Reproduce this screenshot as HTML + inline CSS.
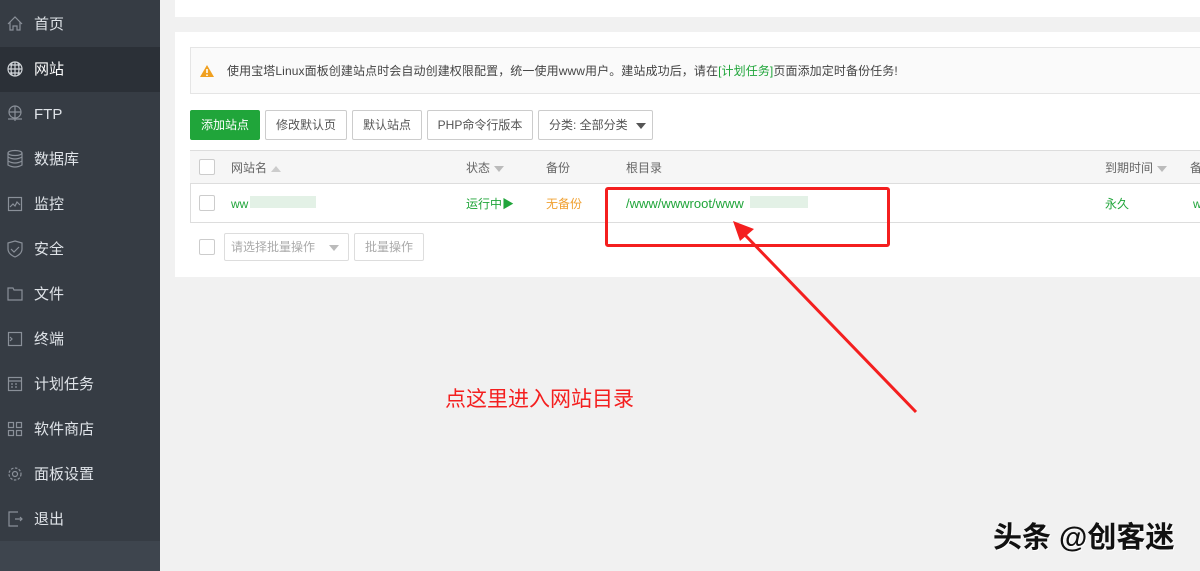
<!DOCTYPE html>
<html><head><meta charset="utf-8"><style>
*{margin:0;padding:0;box-sizing:border-box}
body{width:1200px;height:571px;overflow:hidden;background:#f1f1f1;font-family:"Liberation Sans","Noto Sans CJK SC",sans-serif;position:relative;font-size:12px;color:#555}
.side{position:absolute;left:0;top:0;width:160px;height:541px;background:#363c44}
.side2{position:absolute;left:0;top:541px;width:160px;height:30px;background:#3e454e}
.it{position:absolute;left:0;width:160px;height:45px;color:#dfe3e8;font-size:15px;line-height:45px;padding-left:34px}
.it.on{background:#2b3037;color:#fff}
.abs{position:absolute}
.card{background:#fff}
.btn{position:absolute;top:110px;height:30px;border:1px solid #ccc;border-radius:2px;background:#fff;color:#555;font-size:12px;line-height:28px;text-align:center}
.chk{position:absolute;width:16px;height:16px;border:1px solid #ccc;background:#fff;border-radius:2px}
.tri{display:inline-block;width:0;height:0;border-left:5px solid transparent;border-right:5px solid transparent;border-top:6px solid #bbb;vertical-align:middle;margin-left:4px}
.g{color:#20a53a}
</style></head><body>
<div class="side"></div><div class="side2"></div>
<div class="it" style="top:2px">首页</div>
<div class="it on" style="top:47px">网站</div>
<div class="it" style="top:92px">FTP</div>
<div class="it" style="top:137px">数据库</div>
<div class="it" style="top:182px">监控</div>
<div class="it" style="top:227px">安全</div>
<div class="it" style="top:272px">文件</div>
<div class="it" style="top:317px">终端</div>
<div class="it" style="top:362px">计划任务</div>
<div class="it" style="top:407px">软件商店</div>
<div class="it" style="top:452px">面板设置</div>
<div class="it" style="top:497px">退出</div>
<svg class="abs" style="left:0;top:0" width="30" height="541" fill="none" stroke="#8a9099" stroke-width="1.2">
<path d="M8 24l7-7 7 7M10 22v8h3v-4h4v4h3v-8"/>
<g stroke="#d0d4d8"><circle cx="15" cy="69" r="7"/><path d="M8 69h14M15 62v14M10 65h10M10 73h10M12 63q-2 6 0 12M18 63q2 6 0 12"/></g>
<circle cx="15" cy="112" r="6"/><path d="M9 112h12M15 106v12M8 119h14M15 118v3"/>
<ellipse cx="15" cy="153" rx="7" ry="2.5"/><path d="M8 153v12q7 4 14 0v-12M8 157q7 4 14 0M8 161q7 4 14 0"/>
<rect x="8.5" y="197.5" width="13" height="13"/><path d="M10 207l3-3 2 2 2-4 3 3"/>
<path d="M15 241l7 2v6q0 5-7 8q-7-3-7-8v-6z M11 249l3 3 5-5"/>
<path d="M8 288h5l1 2h8v10h-14z"/>
<rect x="8.5" y="332.5" width="13" height="13"/><path d="M10 337l2 2-2 2"/>
<rect x="8.5" y="377.5" width="13" height="13"/><path d="M8 381h14M11 384h2M15 384h2M11 387h2M15 387h2"/>
<rect x="8.5" y="422.5" width="5" height="5"/><rect x="16.5" y="422.5" width="5" height="5"/><rect x="8.5" y="430.5" width="5" height="5"/><rect x="16.5" y="430.5" width="5" height="5"/>
<circle cx="15" cy="474" r="2.5"/><circle cx="15" cy="474" r="6" stroke-dasharray="2.5 1.5"/>
<path d="M18 512h-9v14h9M15 519h7M20 517l2 2-2 2"/>
</svg>

<div class="abs card" style="left:175px;top:0;width:1025px;height:17px"></div>
<div class="abs card" style="left:175px;top:32px;width:1025px;height:245px"></div>
<div class="abs" style="left:190px;top:47px;width:1010px;height:47px;background:#fafafa;border:1px solid #e5e5e5;border-right:none"></div>
<svg class="abs" style="left:199px;top:64px" width="16" height="14"><path d="M8 1L15 13H1z" fill="#f0a020"/><path d="M8 5v4M8 10.5v1.5" stroke="#fff" stroke-width="1.6"/></svg>
<div class="abs" style="left:227px;top:63px;font-size:12px;color:#444;line-height:16px;white-space:nowrap;letter-spacing:0.1px">使用宝塔Linux面板创建站点时会自动创建权限配置，统一使用www用户。建站成功后，请在<span class="g">[计划任务]</span>页面添加定时备份任务!</div>

<div class="btn" style="left:190px;width:70px;background:#20a53a;border-color:#20a53a;color:#fff">添加站点</div>
<div class="btn" style="left:265px;width:82px">修改默认页</div>
<div class="btn" style="left:352px;width:70px">默认站点</div>
<div class="btn" style="left:427px;width:106px">PHP命令行版本</div>
<div class="btn" style="left:538px;width:115px;text-align:left;padding-left:10px">分类: 全部分类<span class="tri" style="border-top-color:#555;margin-left:8px"></span></div>

<div class="abs" style="left:190px;top:150px;width:1010px;height:34px;background:#f6f6f6;border-top:1px solid #ddd;border-bottom:1px solid #ddd"></div>
<div class="abs" style="left:190px;top:222px;width:1010px;height:1px;background:#ddd"></div>
<div class="abs" style="left:190px;top:184px;width:1px;height:38px;background:#ddd"></div>
<div class="chk" style="left:199px;top:159px"></div>
<div class="chk" style="left:199px;top:195px"></div>
<div class="abs" style="top:160px;left:231px;line-height:16px;color:#666">网站名<span class="tri" style="border-top:none;border-bottom:6px solid #ccc"></span></div>
<div class="abs" style="top:160px;left:466px;line-height:16px;color:#666">状态<span class="tri"></span></div>
<div class="abs" style="top:160px;left:546px;line-height:16px;color:#666">备份</div>
<div class="abs" style="top:160px;left:626px;line-height:16px;color:#666">根目录</div>
<div class="abs" style="top:160px;left:1105px;line-height:16px;color:#666">到期时间<span class="tri"></span></div>
<div class="abs" style="top:160px;left:1190px;line-height:16px;color:#666">备</div>
<div class="abs g" style="top:196px;left:231px;line-height:16px">ww</div>
<div class="abs" style="top:196px;left:250px;width:66px;height:12px;background:#e3f1e6"></div>
<div class="abs g" style="top:196px;left:466px;line-height:16px">运行中▶</div>
<div class="abs" style="top:196px;left:546px;line-height:16px;color:#f0a030">无备份</div>
<div class="abs g" style="top:196px;left:626px;line-height:16px;font-size:13px">/www/wwwroot/www</div>
<div class="abs" style="top:196px;left:750px;width:58px;height:12px;background:#e3f1e6"></div>
<div class="abs g" style="top:196px;left:1105px;line-height:16px">永久</div>
<div class="abs g" style="top:196px;left:1193px;line-height:16px">w</div>

<div class="chk" style="left:199px;top:239px"></div>
<div class="abs" style="left:224px;top:233px;width:125px;height:28px;border:1px solid #ddd;border-radius:2px;color:#aaa;line-height:26px;padding-left:6px">请选择批量操作<span class="tri" style="margin-left:14px"></span></div>
<div class="abs" style="left:354px;top:233px;width:70px;height:28px;border:1px solid #ddd;border-radius:2px;color:#aaa;line-height:26px;text-align:center">批量操作</div>

<div class="abs" style="left:605px;top:187px;width:285px;height:60px;border:3px solid #f41f1f;border-radius:3px"></div>
<svg class="abs" style="left:0;top:0" width="1200" height="571"><path d="M916 412L745 235" stroke="#f41f1f" stroke-width="3"/><path d="M733 221l21 8-14 12z" fill="#f41f1f"/></svg>
<div class="abs" style="left:445px;top:387px;font-size:21px;color:#f41f1f;line-height:26px;white-space:nowrap">点这里进入网站目录</div>
<div class="abs" style="left:993px;top:520px;font-size:29px;color:#111;line-height:36px;font-weight:bold;white-space:nowrap;text-shadow:1px 1px 0 #fff">头条 @创客迷</div>
</body></html>
